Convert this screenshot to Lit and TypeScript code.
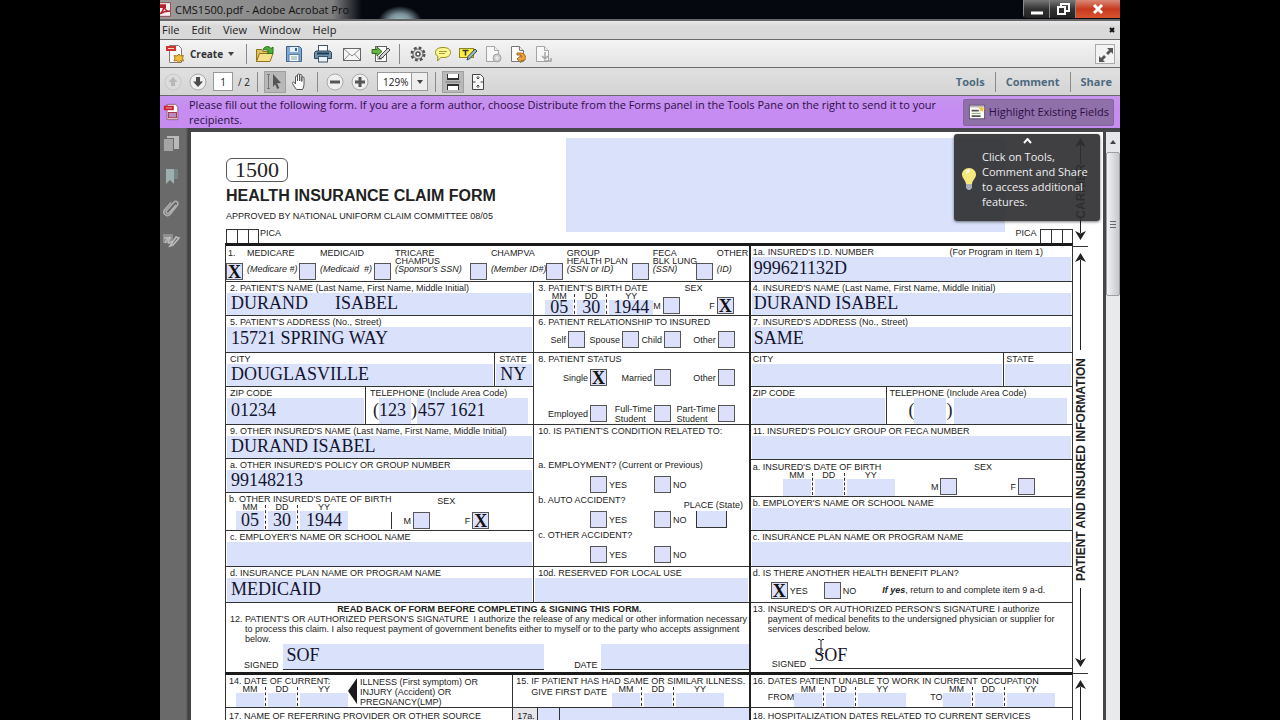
import { LitElement, html, svg, css, nothing } from "lit";
import { customElement } from "lit/decorators.js";

const icon = (body: unknown, size = 20) =>
  html`<svg width=${size} height=${size} viewBox="0 0 20 20" aria-hidden="true">${body}</svg>`;

const page = svg`<path d="M3.500 2.500h8l4 4v11h-12z" fill="#fff" stroke="#777"/><path d="M11.500 2.500v4h4" fill="#eee" stroke="#777"/>`;
const icons = {
  pdf: svg`<path d="M4.500 1.500h9l3 3v14h-12z" fill="#fff" stroke="#8a5a66"/><rect x="1" y="3" width="11" height="5" fill="#c8202e"/><path d="M3 5.500h7" stroke="#f4b9bd"/><rect x="6" y="10.500" width="9" height="6" fill="#b78ac0" stroke="#a02c48"/>`,
  app: svg`<rect x="1" y="1" width="17" height="18" fill="#f4eeee" stroke="#8a2a30"/><path d="M3 3h9v5H3z" fill="#b8202a"/><path d="M4 16c4-3 5-7 5-11 1 5 4 8 8 7-5 0-9 1-13 4z" fill="none" stroke="#b8202a" stroke-width="2"/>`,
  create: svg`<path d="M4.500 1.500h9l3 3v14h-12z" fill="#fff" stroke="#8a7a76"/><rect x="1" y="2" width="10" height="5" fill="#d0342c"/><path d="M3 4.500h6" stroke="#fbd0cc"/><path d="M14 10l1.500 2 3-.5-1 2.500 1 3-3-.5L14 19l-2-2.500-3 .5 1-3-1-2.500 3 .5z" fill="#eebf3c" stroke="#a9791a"/>`,
  open: svg`<path d="M1.500 17.500V5.500h5l1.500 2h6v10z" fill="#e2c35a" stroke="#8f7320"/><path d="M1.500 17.500l3-8h13.500l-3 8z" fill="#f7e08a" stroke="#8f7320"/><path d="M8 6c1-4 6-4.500 8-1.500l2-1.500v6.500h-6l2-2c-1.500-2-4-2-6-1.500z" fill="#4fae3a" stroke="#27701c"/>`,
  save: svg`<path d="M2.500 2.500h13l2 2v13h-15z" fill="#7fa9d0" stroke="#3d6288"/><rect x="6" y="3" width="8" height="5" fill="#e8eef5"/><rect x="11" y="4" width="2" height="3" fill="#3d6288"/><rect x="5" y="10.500" width="10" height="7" fill="#f4f7fa" stroke="#5b7da1"/><path d="M7 13h6M7 15h6" stroke="#8aa"/>`,
  print: svg`<rect x="5.500" y="1.500" width="9" height="6" fill="#fff" stroke="#3f5568"/><path d="M3 7h14l1.500 1.500v6h-17v-6z" fill="#6f93ae" stroke="#2f475b"/><path d="M4 9.500h12" stroke="#22384a" stroke-width="2"/><rect x="5.500" y="12.500" width="9" height="5.500" fill="#e9f2f8" stroke="#3f5568"/>`,
  mail: svg`<rect x="1.500" y="4.500" width="17" height="12" fill="#f6f6f6" stroke="#666"/><path d="M2 5l8 7 8-7M2 16l5.500-6M18 16l-5.500-6" fill="none" stroke="#8b8b8b"/>`,
  sign: svg`<rect x="4.500" y="2.500" width="11" height="15" fill="#fff" stroke="#666"/><path d="M6 13h7M6 15h5" stroke="#888"/><path d="M1 5.500h5v-2.500l5 4.500-5 4.500v-2.500h-5z" fill="#68b447" stroke="#2f6d1d"/><path d="M8 15l1-3 8-8 2 2-8 8z" fill="#cfd3d6" stroke="#444"/>`,
  gear: svg`<circle cx="10" cy="10" r="6" fill="none" stroke="#555" stroke-width="3" stroke-dasharray="2.700 2"/><circle cx="10" cy="10" r="5" fill="#ddd" stroke="#666"/><circle cx="10" cy="10" r="2" fill="#fff" stroke="#555" stroke-width="1.500"/>`,
  note: svg`<path d="M10 3.500c5 0 7.500 2 7.500 5s-2.500 5-7 5c-1 0-2 0-2.500-.2L4.500 17l.5-4.500c-1.500-1-2.500-2-2.500-4 0-3 2.500-5 7.500-5z" fill="#fdf792" stroke="#8d8a1d"/><path d="M6 7.500h8M6 9.500h6" stroke="#9d9a3d"/>`,
  mark: svg`<rect x="1.500" y="4.500" width="14" height="9" fill="#fbee3f" stroke="#8d8520"/><path d="M4.500 6.500h6M7.500 6.500v5" stroke="#333" stroke-width="1.500"/><path d="M9 16l1-3.500 7-7.500 2 2-7 7.500z" fill="#9db4c6" stroke="#3c4a56"/>`,
  pageGrey: svg`<g opacity=".6">${page}<circle cx="14" cy="14" r="4" fill="#bbb" stroke="#777"/><path d="M14 12v4M12 14h4" stroke="#fff"/></g>`,
  pageOrange: svg`${page}<path d="M9 9h3c5 0 6 3 5 7l-4 .5v2L9 15l4-3.500v2c2 0 1-2.500-1-2.500H9z" fill="#f0a63a" stroke="#a8651a"/>`,
  pageUndo: svg`<g opacity=".6">${page}<path d="M12 8v6M9 12l3 3 3-3M11 17h7v-3" fill="none" stroke="#777" stroke-width="1.500"/></g>`,
  expand: svg`<path d="M11 3h6v6l-2-2-3 3-2-2 3-3zM9 17H3v-6l2 2 3-3 2 2-3 3z" fill="#555"/>`,
  up: svg`<circle cx="10" cy="10" r="8" fill="#dcdcdc" stroke="#c8c8c8"/><path d="M10 5l4.500 5H12v4H8v-4H5.500z" fill="#b8b8b8"/>`,
  down: svg`<circle cx="10" cy="10" r="8" fill="#efefef" stroke="#a8a8a8"/><path d="M10 15l5-5.500h-3V5H8v4.500H5z" fill="#4c4c4c"/>`,
  select: svg`<path d="M3.500 3v13M2 2.500h3M2 16.500h3" stroke="#777" fill="none"/><path d="M8 2l8 9-4 .3 2.300 4.700-2 1-2.200-4.700L8 15z" fill="#555"/>`,
  hand: svg`<path d="M6.500 17.500C4 14 2 11.500 2.500 10.500s2-.5 3 1.500V5c0-1.500 2-1.500 2 0v4-6c0-1.500 2.200-1.500 2.200 0v6-5.500c0-1.500 2.100-1.500 2.100 0V9.500 6c0-1.500 2.200-1.500 2.200 0 0 5 .5 8-1.500 11.500z" fill="#fff" stroke="#555"/>`,
  minus: svg`<circle cx="10" cy="10" r="8" fill="#efefef" stroke="#a8a8a8"/><path d="M5 10h10" stroke="#555" stroke-width="3"/>`,
  plus: svg`<circle cx="10" cy="10" r="8" fill="#efefef" stroke="#a8a8a8"/><path d="M5 10h10M10 5v10" stroke="#555" stroke-width="3"/>`,
  scroll: svg`<path d="M4.500 2v5h11V2M4.500 18v-5h11v5" fill="#fff" stroke="#333"/><path d="M4 7h12M4 13h12" stroke="#333" stroke-width="2"/><path d="M2.500 10h15" stroke="#777"/>`,
  fit: svg`<path d="M4.500 2.500h8l3 3v12h-11z" fill="#f6f6f6" stroke="#444"/><path d="M10 4v3M8.500 5.500L10 7l1.500-1.500M10 16v-3M8.500 14.500L10 13l1.500 1.500M5 10h2.500M15 10h-2.500" fill="none" stroke="#444"/>`,
  fields: svg`<rect x="1.500" y="2.500" width="17" height="15" fill="#fff" stroke="#5b4a6b"/><path d="M2 4h16" stroke="#bbb" stroke-width="2"/><path d="M4 8.500h8M4 14.500h10" stroke="#555" stroke-width="2"/><path d="M4 11.500h10" stroke="#7a9a5a"/><path d="M15 3l1 2.500 3 .5-2.500 1.500.5 3-2-2-2.500 1 1-2.500-2-2h2.500z" fill="#f3c63a"/>`,
  pages: svg`<rect x="6" y="2" width="12" height="13" fill="#b9b9b9"/><rect x="2.500" y="4.500" width="10" height="13" fill="#a4a4a4" stroke="#6c6c6c"/>`,
  bookmark: svg`<rect x="5" y="3" width="12" height="10" fill="#778484"/><path d="M5 3h8v15l-4-4-4 4z" fill="#9db0b0"/>`,
  clip: svg`<path d="M15 7l-7 8c-1.500 1.500-4-.5-2.500-2.500L13 4c2-2 5 .5 3.500 3L9 16.500c-3 3-8-1-5.500-4.500L10 4.500" fill="none" stroke="#b0b0b0" stroke-width="1.500"/>`,
  ink: svg`<path d="M2 4h10v9H2z" fill="#8e8e8e"/><path d="M4 13c4-7 6-7 4-3s0 4 3 1M9 16l6-9 3 1-6 7zM3 8h7" fill="none" stroke="#bdbdbd" stroke-width="1.500"/>`,
};

const btn = (name: string, glyph: unknown, cls = "") =>
  html`<button class="tool ${cls}" title=${name} aria-label=${name}>${icon(glyph)}</button>`;

const caret = html`<svg width="6" height="4" viewBox="0 0 6 4" aria-hidden="true"><path d="M0 0h6L3 4z" fill="#444" /></svg>`;

const field = (id: string, label: string, value = "", note = "") => html`
  <div class="cell">
    <div class="cap"><label for=${id}>${label}</label>${note ? html`<span class="note">${note}</span>` : nothing}</div>
    <input class="fill" id=${id} .value=${value} />
  </div>`;

const phone = (id: string, area = "", number = "") => html`
  <div class="cell">
    <label class="cap" for=${id}>TELEPHONE (Include Area Code)</label>
    <div class="phone">
      <span>(</span><input class="fill" aria-label="Area code" .value=${area} /><span>)</span
      ><input class="fill" id=${id} .value=${number} />
    </div>
  </div>`;

const date = (name: string, values: string[] = ["", "", ""]) => html`
  <div class="date">
    ${["MM", "DD", "YY"].map(
      (unit, i) => html`<label><span>${unit}</span><input class="fill" aria-label="${name} ${unit}" .value=${values[i]} /></label>`
    )}
  </div>`;

const tick = (text: unknown, checked = false, after = false, cls = "") => html`
  <label class="tick ${cls}">
    ${after ? nothing : html`<span>${text}</span>`}
    <input type="checkbox" .checked=${checked} />
    ${after ? html`<span>${text}</span>` : nothing}
  </label>`;

const sex = (female = false) => html`
  <div class="sex">
    <span>SEX</span>
    <div>${tick("M")}${tick("F", female)}</div>
  </div>`;

const head = (down = false) => html`<svg class="head" width="11" height="9" viewBox="0 0 11 9" aria-hidden="true">
  <path d=${down ? "M0 0l5.500 2.500L11 0 5.500 9z" : "M0 9l5.500-2.500L11 9 5.500 0z"} fill="#222" />
</svg>`;

const programs: [string, string, string, boolean][] = [
  ["MEDICARE", "", "(Medicare #)", true],
  ["MEDICAID", "", "(Medicaid  #)", false],
  ["TRICARE", "CHAMPUS", "(Sponsor's SSN)", false],
  ["CHAMPVA", "", "(Member ID#)", false],
  ["GROUP", "HEALTH PLAN", "(SSN or ID)", false],
  ["FECA", "BLK LUNG", "(SSN)", false],
  ["OTHER", "", "(ID)", false],
];

@customElement("app-root")
export class AppRoot extends LitElement {
  static styles = css`
    :host {
      display: block;
      height: 100vh;
      padding: 0 12.5%;
      box-sizing: border-box;
      background: #000;
      overflow: hidden;
      font: 11px/14px "Open Sans", "Noto Sans", sans-serif;
      color: #222;
    }
    * { box-sizing: border-box; }
    button, input, select { font: inherit; color: inherit; border: 0; padding: 0; margin: 0; background: none; border-radius: 0; }
    svg { display: block; flex: none; }
    .window { height: 100%; display: flex; flex-direction: column; position: relative; }
    .row { display: flex; align-items: center; flex: none; }
    .push { margin-left: auto; }

    .title { height: 21px; border-bottom: 2px solid #666; background: radial-gradient(ellipse 22px 16px at 240px 22px, #a9c0c8, #7c939b 50%, transparent), linear-gradient(90deg, #9a9a9a, #808080 18%, #05080f 21%); gap: 3px; color: #111; overflow: hidden; }
    .title svg { margin-left: -3px; }
    .title .controls { display: flex; height: 18px; align-self: flex-start; border-radius: 0 0 0 4px; overflow: hidden; }
    .title .controls svg { margin: 0; }
    .controls button { width: 26px; background: linear-gradient(#777, #333 50%, #222); border-left: 1px solid #888; display: grid; place-items: center; }
    .controls .close { width: 45px; background: linear-gradient(#d98a78, #c8391f 50%, #d9542f); }

    .menu { height: 19px; background: linear-gradient(#e8e8e8, #d9d9d9 30%); border-bottom: 1px solid #6a6a6a; padding: 0 5px 0 2px; gap: 12px; }
    .bar { height: 28px; border-bottom: 1px solid #6a6a6a; padding: 0 5px; }
    .bar.one { background: linear-gradient(#f4f4f4, #e3e3e3); }
    .bar.two { background: linear-gradient(#e0e0e0, #d4d4d4); padding: 0 8px 0 3px; }
    .sep { width: 1px; height: 20px; background: #8a8a8a; margin: 0 8px; flex: none; }
    .two .sep { margin: 0 7px; }
    .tool { width: 20px; height: 20px; display: grid; place-items: center; flex: none; }
    .tool.on { background: #b8b8b8; outline: 1px solid #a0a0a0; }
    .group { display: flex; gap: 9px; align-items: center; }
    .group.tight { gap: 5px; }
    .create { display: flex; align-items: center; gap: 5px; font-weight: 700; font-size: 10px; width: 73px; color: #333; }
    .boxed { border: 1px solid #aaa; background: #f3f3f3; }
    .page-no { width: 20px; height: 19px; background: #fff; border: 1px solid #999; text-align: center; font-size: 10px; }
    .pager { display: flex; gap: 5px; align-items: center; font-size: 10px; white-space: pre; }
    .zoom { display: flex; align-items: center; height: 19px; border: 1px solid #999; background: #fff; position: relative; margin-left: 2px; }
    .zoom select { appearance: none; width: 49px; height: 17px; padding-left: 5px; font-size: 10px; background: linear-gradient(90deg, #fff 33px, #999 33px, #999 34px, #eee 34px); }
    .zoom svg { position: absolute; right: 4px; pointer-events: none; }
    .panes { display: flex; align-items: center; color: #4d6a80; }
    .panes button { font-weight: 700; }
    .panes .sep { margin: 0 10px; }

    .notice { height: 32px; background: linear-gradient(#c795ee, #c68cf2 40%, #c68cf2); gap: 8px; padding: 0 6px 0 3px; color: #2d0f45; }
    .notice p { margin: 0; flex: 1; line-height: 15px; }
    .notice button { display: flex; align-items: center; gap: 3px; height: 27px; padding: 0 4px; background: #9070a8; border: 1px solid #84659c; border-radius: 2px; white-space: nowrap; }

    .work { flex: 1; min-height: 0; display: flex; background: #47474b; padding-top: 4px; }
    .rail { width: 31px; margin-top: -4px; padding: 6px 0 0; background: linear-gradient(90deg, #6a6a6a 26px, #444 28px); display: flex; flex-direction: column; gap: 12px; }
    .rail .tool { margin-left: 1px; }
    .scroll { width: 14px; margin-left: 3px; background: #e9eaec; display: flex; flex-direction: column; }
    .scroll .arrow { height: 20px; display: grid; place-items: center; background: #e6e7ea; }
    .scroll .thumb { height: 144px; border: 1px solid #9c9ea3; border-radius: 2px; background: linear-gradient(90deg, #f2f2f4, #c6c8cc); display: flex; flex-direction: column; gap: 2px; justify-content: center; padding: 0 3px; }
    .thumb i { height: 1px; background: #666; }

    .sheet { flex: 1; min-width: 0; background: #fff; overflow: hidden; display: flex; align-items: flex-start; padding-left: 34px; font: 9px/9px "Liberation Sans", Arial, sans-serif; color: #222; }
    .form { flex: 1; min-width: 0; white-space: nowrap; }
    .masthead { display: grid; grid-template-columns: 341fr 439fr 68fr; height: 97px; }
    .brand { padding: 26px 0 0 1px; }
    .badge { width: fit-content; border: 1px solid #555; border-radius: 6px; font: 22px/22px "Liberation Serif", serif; padding: 0 8px; }
    h1 { font-size: 16px; line-height: 16px; margin: 6px 0 8px; }
    .brand p { margin: 0; }
    .carrier { background: #dae2fb; margin: 6px 0 -3px; width: auto; height: auto; }
    .pica { display: flex; justify-content: space-between; height: 14px; padding-left: 1px; }
    .pica div { display: flex; gap: 1px; }
    .pica b { display: grid; grid-template-columns: repeat(3, 11px); }
    .pica i { border: 1px solid #333; border-width: 1px 0 0 1px; }
    .pica i:last-child { border-right-width: 1px; }

    .thick { border-top: 3px solid #1a1a1a; }
    .split { display: grid; grid-template-columns: minmax(0, 524fr) minmax(0, 324fr); border-left: 1px solid #333; border-right: 1px solid #333; }
    .split > :nth-child(2) { border-left: 2px solid #222; }
    .halves { display: grid; grid-template-columns: minmax(0, 308fr) minmax(0, 216fr); }
    .halves > :nth-child(2) > * { border-left: 1px solid #333; }
    .stack > *, .programs { border-bottom: 1px solid #333; }
    .stack, .stack > div { min-width: 0; }
    .h34 { height: 34px; }
    .h35 { height: 35px; }
    .h36 { height: 36px; }
    .h37 { height: 37px; }
    .h38 { height: 38px; }
    .h72 { height: 72px; }
    .h142 { height: 142px; }
    .stack > .line { display: grid; grid-template-rows: minmax(0, 1fr); }
    .line > .cell + .cell { border-left: 1px solid #333; }
    .city { grid-template-columns: 268fr 39fr; }
    .city.wide { grid-template-columns: 253fr 69fr; }
    .zip { grid-template-columns: 139fr 168fr; }
    .zip.wide { grid-template-columns: 136fr 186fr; }
    .cell { display: flex; flex-direction: column; padding: 2px 1px 0; min-width: 0; height: 100%; }
    .cap { display: flex; justify-content: space-between; padding-left: 3px; flex: none; }
    .note { padding-right: 28px; }
    .fill { background: #dae2fb; font: 18px/20px "Liberation Serif", serif; color: #14142e; min-width: 0; min-height: 0; width: 100%; flex: 1; padding: 0 4px 3px; outline: 0; }
    .right .cap { padding-left: 1px; }
    .right .fill { padding-left: 2px; }
    .phone { flex: 1; display: flex; min-height: 0; padding: 0 4px 0 6px; font: 18px/24px "Liberation Serif", serif; }
    .phone .fill:nth-of-type(1) { flex: 0 0 32px; padding: 0 0 3px; }
    .phone .fill:nth-of-type(2) { padding-left: 1px; }
    .wide .phone { padding-left: 20px; }
    .wide .phone span:nth-of-type(2) { padding-right: 2px; }

    .programs { display: grid; grid-template-columns: 73fr 75fr 96fr 76fr 86fr 64fr 53fr; height: 36px; }
    .programs label { display: grid; grid-template-columns: 18px 1fr; column-gap: 3px; line-height: 8px; min-width: 0; padding: 3px 0 1px; white-space: pre; }
    .programs .mark { display: flex; flex-direction: column; justify-content: space-between; text-indent: 2px; }
    .programs .names { display: grid; grid-template-rows: 8px 8px 8px; }
    input[type="checkbox"] { appearance: none; width: 17px; height: 17px; border: 1px solid #555; background: #dde0fa; flex: none; display: grid; place-items: center; overflow: hidden; }
    input[type="checkbox"]:checked::before { content: "X"; font: 700 18px/16px "Liberation Serif", serif; color: #111; text-indent: 0; }
    .tick { display: flex; align-items: center; gap: 2px; line-height: 10px; }

    .dated { display: grid; grid-template-rows: minmax(0, 1fr); padding: 2px 0 0 3px; }
    .dated > div { min-height: 0; }
    .dated > div:first-child { display: flex; flex-direction: column; }
    .date { flex: 1; display: grid; grid-template-columns: 28px 28px 48px; grid-template-rows: minmax(0, 1fr); gap: 4px; padding-left: 7px; min-height: 0; }
    .date label { display: flex; flex-direction: column; text-align: center; line-height: 7px; min-height: 0; position: relative; }
    .date label + label::before { content: ""; position: absolute; left: -3px; top: 1px; bottom: 1px; border-left: 1px dashed #333; }
    .date .fill { padding: 0; text-align: center; line-height: 16px; }
    .birth { grid-template-columns: 113fr 98fr; padding: 2px 15px 0 4px; }
    .birth .date { grid-template-columns: 28px 28px 44px; }
    .other-birth { grid-template-columns: 152fr 108fr; padding-right: 44px; }
    .insured-birth { grid-template-columns: 178fr 104fr; padding: 3px 37px 0 2px; }
    .insured-birth .date { padding-left: 30px; }
    .sex { display: flex; flex-direction: column; justify-content: space-between; text-align: center; padding-bottom: 1px; }
    .sex > div { display: flex; justify-content: space-between; }
    .other-birth .sex > div { border-left: 1px solid #333; padding-left: 11px; }
    .other-birth .sex > span { padding: 2px 0 0 12px; }
    .choices { display: grid; align-items: center; flex: 1; }
    .choices .tick { justify-content: flex-end; }
    .choices.four { grid-template-columns: 50fr 54fr 42fr 54fr 13fr; }
    .choices.three { grid-template-columns: 72fr 64fr 64fr 13fr; }
    .choices.three:nth-of-type(1) { flex: 0 0 27px; }
    .choices.low { padding-top: 12px; }
    .related { padding-top: 2px; display: flex; flex-direction: column; }
    .related .cap { padding-bottom: 25px; padding-left: 4px; }
    .question { display: grid; grid-template-columns: minmax(0, 56fr) minmax(0, 64fr) minmax(0, 42fr) minmax(0, 53fr); row-gap: 6px; height: 35px; grid-template-rows: 9px 17px; }
    .question > span:first-child { grid-column: 1 / 4; grid-row: 1; padding-left: 4px; }
    .yes { grid-area: 2 / 2; }
    .no { grid-area: 2 / 3; }
    .place { grid-column: 4; grid-row: 1 / 3; display: flex; flex-direction: column; gap: 1px; padding: 5px 22px 0 0; }
    .place span { margin-left: -12px; }
    .place input { border: 1px solid #333; border-top: 0; }
    .sign { padding: 1px 0 3px 4px; height: 69px; display: flex; flex-direction: column; line-height: 10px; border-bottom: 0; }
    .right .sign { padding-left: 2px; border-bottom: 0; }
    .sign strong { text-align: center; }
    .sign p { margin: 0; display: grid; grid-template-columns: 15px 1fr; }
    .signed { display: flex; align-items: flex-end; gap: 4px; margin-top: auto; padding-left: 14px; }
    .signed .fill { height: 26px; border-bottom: 1px solid #333; flex: 264 1 0; }
    .signed .fill.short { flex-grow: 145; }
    .signed .fill.plain { background: none; padding: 0 4px; }
    .signed .gap { flex: 0 0 22px; }
    .benefit { display: flex; align-items: center; gap: 16px; padding: 1px 0 0 19px; flex: 1; }
    .benefit .return { margin-left: 10px; }

    .lower { display: grid; grid-template-columns: minmax(0, 287fr) minmax(0, 237fr); }
    .lower > :nth-child(even) { border-left: 1px solid #333; }
    .lower > *, .from { border-bottom: 1px solid #333; height: 33px; padding: 2px 0 0 3px; }
    .lower .source, .from.stay { padding-top: 4px; }
    .current { display: flex; }
    .current > div:first-child, .similar, .from { display: flex; flex-direction: column; }
    .current svg { margin: 1px 3px 0 0; }
    .current p { margin: 0; line-height: 10px; }
    .from { padding-left: 2px; }
    .indent { display: flex; flex: 1; padding-left: 15px; min-height: 0; }
    .indent > span { line-height: 12px; }
    .similar .date { padding-left: 5px; }
    .from .indent > span { align-self: center; }
    .from .date { padding-left: 0; flex: none; }
    .from .date + span { margin-left: 24px; }
    .lower .ref { display: grid; grid-template-columns: 24px 22px 1fr; padding: 0; }
    .ref > * + * { border-left: 1px solid #333; }
    .ref label { background: #e6e6ea; padding: 4px 0 0 4px; }

    .margin { width: 30px; display: flex; flex-direction: column; font-weight: 700; font-size: 12px; line-height: 12px; padding-right: 15px; flex: none; }
    .margin section { display: flex; flex-direction: column; align-items: center; padding: 6px 0; border-bottom: 1px solid #333; flex: none; }
    .margin .shaft { flex: 4; width: 1px; background: #222; }
    .margin .head + .shaft { flex: 5; }
    .margin .head { margin: 0 0 -2px; }
    .margin .shaft + .head { margin: -2px 0 0; }
    .margin span { writing-mode: vertical-rl; transform: rotate(180deg); white-space: nowrap; margin: 8px 0; }
    .m1 { height: 115px; }
    .m1 span { margin: 0; }
    .m2 { height: 427px; }
    .m3 { height: 120px; }

    .tip { position: absolute; top: 134px; right: 20px; width: 146px; height: 87px; padding: 0 8px; background: rgba(48, 48, 50, 0.92); border-radius: 3px; box-shadow: 0 1px 3px #0008; color: #eee; display: grid; grid-template-columns: 13px 1fr; column-gap: 7px; line-height: 15px; align-content: start; align-items: center; }
    .tip .chev { grid-column: 1 / 3; justify-self: center; margin: 4px 0 5px; }
    .tip p { margin: 0; white-space: nowrap; }
    .ibeam { position: absolute; left: 68.500%; top: 639px; }
  `;

  render() {
    return html`
      <div class="window">
        <header class="row title">
          ${icon(icons.app, 15)}<span>CMS1500.pdf - Adobe Acrobat Pro</span>
          <div class="controls push">
            <button aria-label="Minimize"><svg width="14" height="12"><path d="M1 10h12" stroke="#fff" stroke-width="3" /></svg></button>
            <button aria-label="Restore"><svg width="14" height="14"><path d="M5 4V2h8v7h-3" fill="none" stroke="#fff" stroke-width="2" /><rect x="2" y="5" width="7" height="7" fill="none" stroke="#fff" stroke-width="2" /></svg></button>
            <button class="close" aria-label="Close"><svg width="12" height="12"><path d="M2 2l8 8M10 2l-8 8" stroke="#fff" stroke-width="3" /></svg></button>
          </div>
        </header>
        <nav class="row menu">
          ${["File", "Edit", "View", "Window", "Help"].map((m) => html`<button>${m}</button>`)}
          <button class="push" aria-label="Close document"><svg width="6" height="6"><path d="M1 1l4 4M5 1L1 5" stroke="#111" stroke-width="2" /></svg></button>
        </nav>
        <div class="row bar one">
          <button class="create">${icon(icons.create)}<span>Create</span>${caret}</button>
          <i class="sep"></i>
          <div class="group">
            ${btn("Open", icons.open)}${btn("Save", icons.save)}${btn("Print", icons.print)}${btn("Email", icons.mail)}${btn("Sign", icons.sign)}
          </div>
          <i class="sep"></i>
          <div class="group tight">
            ${btn("Settings", icons.gear)}${btn("Comment", icons.note)}${btn("Highlight text", icons.mark)}${btn("Delete page", icons.pageGrey)}${btn("Rotate page", icons.pageOrange)}${btn("Extract page", icons.pageUndo)}
          </div>
          <div class="push">${btn("Read mode", icons.expand, "boxed")}</div>
        </div>
        <div class="row bar two">
          <div class="pager">
            ${btn("Previous page", icons.up)}${btn("Next page", icons.down)}
            <input class="page-no" aria-label="Page" .value=${"1"} /><span>/ 2</span>
          </div>
          <i class="sep"></i>
          <div class="group tight">${btn("Select", icons.select, "on")}${btn("Hand", icons.hand)}</div>
          <i class="sep"></i>
          <div class="group tight">
            ${btn("Zoom out", icons.minus)}${btn("Zoom in", icons.plus)}
            <div class="zoom"><select aria-label="Zoom"><option>129%</option></select>${caret}</div>
          </div>
          <i class="sep"></i>
          <div class="group tight">${btn("Scrolling", icons.scroll, "on")}${btn("Fit page", icons.fit)}</div>
          <div class="panes push">
            <button>Tools</button><i class="sep"></i><button>Comment</button><i class="sep"></i><button>Share</button>
          </div>
        </div>
        <div class="row notice">
          ${icon(icons.pdf, 18)}
          <p>Please fill out the following form. If you are a form author, choose Distribute from the Forms panel in the Tools Pane on the right to send it to your recipients.</p>
          <button>${icon(icons.fields, 18)}Highlight Existing Fields</button>
        </div>
        <main class="work">
          <nav class="rail">
            ${btn("Pages", icons.pages)}${btn("Bookmarks", icons.bookmark)}${btn("Attachments", icons.clip)}${btn("Signatures", icons.ink)}
          </nav>
          <article class="sheet">${this.form()}${this.margins()}</article>
          <div class="scroll">
            <div class="arrow"><svg width="6" height="4"><path d="M0 4h6L3 0z" fill="#444" /></svg></div>
            <div class="thumb"><i></i><i></i><i></i></div>
          </div>
        </main>
        <aside class="tip">
          <svg class="chev" width="9" height="6"><path d="M1 5l3.500-4L8 5" fill="none" stroke="#fff" stroke-width="2" /></svg>
          <svg width="14" height="22" viewBox="0 0 14 22"><path d="M7 0c4 0 7 3 7 6.500S10.500 12 10 16H4C3.500 12 0 10 0 6.500S3 0 7 0z" fill="#f7e87c" /><path d="M4 3c2-2 4-1 4 0S5 5 4 7z" fill="#fffde0" /><path d="M4 16h6v4l-2 2H6l-2-2z" fill="#a9adb5" /></svg>
          <p>Click on Tools,<br />Comment and Share<br />to access additional<br />features.</p>
        </aside>
        <svg class="ibeam" width="6" height="15"><path d="M0 .5h2l1 1 1-1h2M3 1v13M0 14.500h2l1-1 1 1h2" fill="none" stroke="#222" /></svg>
      </div>
    `;
  }

  form() {
    const boxes = html`<b><i></i><i></i><i></i></b>`;
    return html`
      <form class="form" @submit=${(e: Event) => e.preventDefault()}>
        <div class="masthead">
          <div class="brand">
            <div class="badge">1500</div>
            <h1>HEALTH INSURANCE CLAIM FORM</h1>
            <p>APPROVED BY NATIONAL UNIFORM CLAIM COMMITTEE 08/05</p>
          </div>
          <input class="carrier" aria-label="Carrier" />
        </div>
        <div class="pica"><div>${boxes}PICA</div><div>PICA&nbsp;${boxes}</div></div>
        <div class="split thick">
          <div>
            <div class="programs">
              ${programs.map(
                ([a, b, c, on], i) => html`<label
                  ><span class="mark"><span>${i ? "" : "1."}</span><input type="checkbox" .checked=${on} /></span
                  ><span class="names"><span>${a}</span><span>${b}</span><em>${c}</em></span></label>`
              )}
            </div>
            <div class="halves">${this.patient()}${this.status()}</div>
            <div class="sign">
              <strong>READ BACK OF FORM BEFORE COMPLETING &amp; SIGNING THIS FORM.</strong>
              <p><span>12.</span><span>PATIENT'S OR AUTHORIZED PERSON'S SIGNATURE &nbsp;I authorize the release of any medical or other information necessary<br />to process this claim. I also request payment of government benefits either to myself or to the party who accepts assignment<br />below.</span></p>
              <div class="signed">
                <label for="s12">SIGNED</label><input class="fill" id="s12" .value=${"SOF"} /><span class="gap"></span>
                <label for="d12">DATE</label><input class="fill short" id="d12" />
              </div>
            </div>
          </div>
          ${this.insured()}
        </div>
        <div class="split thick">
          <div class="lower">
            <div class="current">
              <div><span>14. DATE OF CURRENT:</span>${date("Current")}</div>
              <svg width="9" height="26"><path d="M9 0v26L0 13z" fill="#1a1a1a" /></svg>
              <p>ILLNESS (First symptom) OR<br />INJURY (Accident) OR<br />PREGNANCY(LMP)</p>
            </div>
            <div class="similar">
              <span>15. IF PATIENT HAS HAD SAME OR SIMILAR ILLNESS.</span>
              <div class="indent"><span>GIVE FIRST DATE</span>${date("First")}</div>
            </div>
            <div class="source">17. NAME OF REFERRING PROVIDER OR OTHER SOURCE</div>
            <div class="ref"><label for="r17">17a.</label><input class="fill" aria-label="Qualifier" /><input class="fill" id="r17" /></div>
          </div>
          <div>
            <div class="from">
              <span>16. DATES PATIENT UNABLE TO WORK IN CURRENT OCCUPATION</span>
              <div class="indent"><span>FROM</span>${date("From")}<span>TO</span>${date("To")}</div>
            </div>
            <div class="from stay">18. HOSPITALIZATION DATES RELATED TO CURRENT SERVICES</div>
          </div>
        </div>
      </form>
    `;
  }

  patient() {
    return html`
      <div class="stack">
        <div class="h34">${field("f2", "2. PATIENT'S NAME (Last Name, First Name, Middle Initial)", "DURAND      ISABEL")}</div>
        <div class="h37">${field("f5", "5. PATIENT'S ADDRESS (No., Street)", "15721 SPRING WAY")}</div>
        <div class="line city h34">${field("c5", "CITY", "DOUGLASVILLE")}${field("s5", "STATE", "NY")}</div>
        <div class="line zip h38">${field("z5", "ZIP CODE", "01234")}${phone("t5", "123", "457 1621")}</div>
        <div class="h34">${field("f9", "9. OTHER INSURED'S NAME (Last Name, First Name, Middle Initial)", "DURAND ISABEL")}</div>
        <div class="h34">${field("f9a", "a. OTHER INSURED'S POLICY OR GROUP NUMBER", "99148213")}</div>
        <div class="dated other-birth h38">
          <div><span>b. OTHER INSURED'S DATE OF BIRTH</span>${date("Other insured", ["05", "30", "1944"])}</div>
          ${sex(true)}
        </div>
        <div class="h36">${field("f9c", "c. EMPLOYER'S NAME OR SCHOOL NAME")}</div>
        <div class="h36">${field("f9d", "d. INSURANCE PLAN NAME OR PROGRAM NAME", "MEDICAID")}</div>
      </div>
    `;
  }

  status() {
    const question = (text: string, place = false) => html`
      <div class="question">
        <span>${text}</span>${tick("YES", false, true, "yes")}${tick("NO", false, true, "no")}
        ${place ? html`<div class="place"><span>PLACE (State)</span><input class="fill" aria-label="Place" /></div>` : nothing}
      </div>`;
    return html`
      <div class="stack">
        <div class="dated birth h34">
          <div><span>3. PATIENT'S BIRTH DATE</span>${date("Birth", ["05", "30", "1944"])}</div>
          ${sex(true)}
        </div>
        <div class="h37">
          <div class="cell">
            <span class="cap">6. PATIENT RELATIONSHIP TO INSURED</span>
            <div class="choices four">${tick("Self")}${tick("Spouse")}${tick("Child")}${tick("Other")}</div>
          </div>
        </div>
        <div class="h72">
          <div class="cell">
            <span class="cap">8. PATIENT STATUS</span>
            <div class="choices three">${tick("Single", true)}${tick("Married")}${tick("Other")}</div>
            <div class="choices three low">
              ${tick("Employed")}${tick(html`Full-Time<br />Student`)}${tick(html`Part-Time<br />Student`)}
            </div>
          </div>
        </div>
        <div class="h142 related">
          <span class="cap">10. IS PATIENT'S CONDITION RELATED TO:</span>
          ${question("a. EMPLOYMENT? (Current or Previous)")}${question("b. AUTO ACCIDENT?", true)}${question("c. OTHER ACCIDENT?")}
        </div>
        <div class="h36">${field("f10d", "10d. RESERVED FOR LOCAL USE")}</div>
      </div>
    `;
  }

  insured() {
    return html`
      <div class="stack right">
        <div class="h36">${field("f1a", "1a. INSURED'S I.D. NUMBER", "999621132D", "(For Program in Item 1)")}</div>
        <div class="h34">${field("f4", "4. INSURED'S NAME (Last Name, First Name, Middle Initial)", "DURAND ISABEL")}</div>
        <div class="h37">${field("f7", "7. INSURED'S ADDRESS (No., Street)", "SAME")}</div>
        <div class="line city wide h34">${field("c7", "CITY")}${field("s7", "STATE")}</div>
        <div class="line zip wide h38">${field("z7", "ZIP CODE")}${phone("t7")}</div>
        <div class="h35">${field("f11", "11. INSURED'S POLICY GROUP OR FECA NUMBER")}</div>
        <div class="dated insured-birth h37">
          <div><span>a. INSURED'S DATE OF BIRTH</span>${date("Insured")}</div>
          ${sex()}
        </div>
        <div class="h34">${field("f11b", "b. EMPLOYER'S NAME OR SCHOOL NAME")}</div>
        <div class="h36">${field("f11c", "c. INSURANCE PLAN NAME OR PROGRAM NAME")}</div>
        <div class="h36">
          <div class="cell">
            <span class="cap">d. IS THERE ANOTHER HEALTH BENEFIT PLAN?</span>
            <div class="benefit">
              ${tick("YES", true, true)}${tick("NO", false, true)}
              <span class="return"><b><em>If yes</em></b>, return to and complete item 9 a-d.</span>
            </div>
          </div>
        </div>
        <div class="sign">
          <p><span>13.</span><span>INSURED'S OR AUTHORIZED PERSON'S SIGNATURE I authorize<br />payment of medical benefits to the undersigned physician or supplier for<br />services described below.</span></p>
          <div class="signed"><label for="s13">&nbsp; SIGNED</label><input class="fill plain" id="s13" .value=${"SOF"} /></div>
        </div>
      </div>
    `;
  }

  margins() {
    const shaft = html`<i class="shaft"></i>`;
    return html`
      <div class="margin">
        <section class="m1">${head()}${shaft}<span>CARRIER</span>${shaft}${head(true)}</section>
        <section class="m2">${head()}${shaft}<span>PATIENT AND INSURED INFORMATION</span>${shaft}${head(true)}</section>
        <section class="m3">${head()}${shaft}</section>
      </div>
    `;
  }
}
